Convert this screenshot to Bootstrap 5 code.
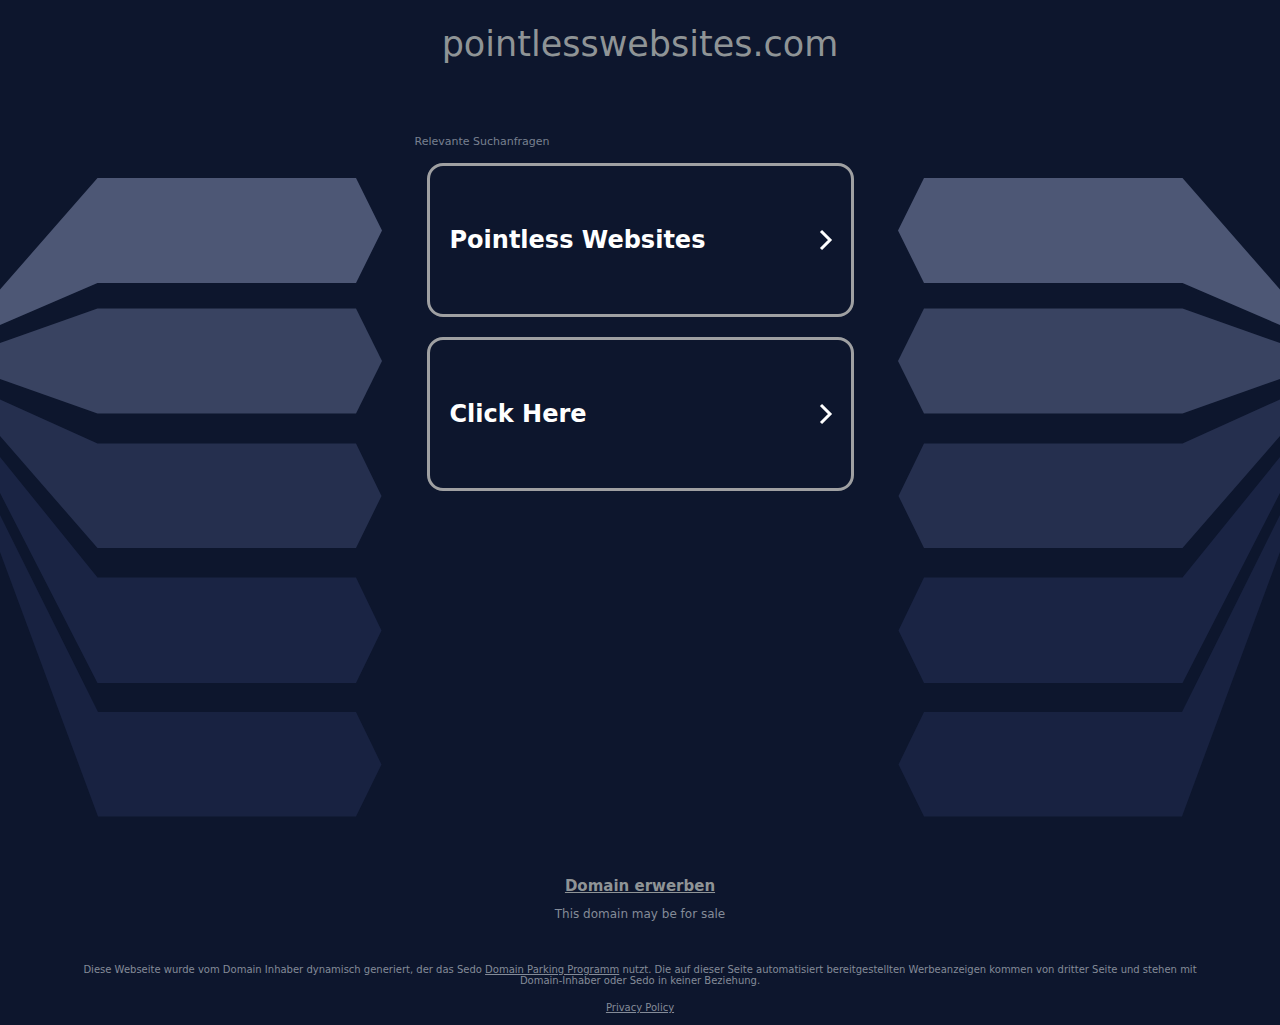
<!DOCTYPE html>
<html lang="de">
<head>
<meta charset="utf-8">
<meta name="viewport" content="width=device-width, initial-scale=1">
<title>pointlesswebsites.com</title>
<link href="https://cdn.jsdelivr.net/npm/bootstrap@5.3.0/dist/css/bootstrap.min.css" rel="stylesheet">
<style>
  body { background: #0d162d; color: #848b98; font-family: "DejaVu Sans", sans-serif; }
  a { color: inherit; }
  .domain-title { color: #8f9496; font-size: 35px; line-height: 48px; padding: 20px 0 60px; }
  .arrows { flex: 0 0 382px; margin-top: 50px; }
  .arrows svg { display: block; width: 100%; height: auto; }
  .searches { flex: 0 1 451px; }
  .searches h2 { font-size: 11px; line-height: 12px; margin-bottom: 15px; color: #788090; padding-top: 8px; }
  .search-list { gap: 20px; }
  .search-link { min-height: 154px; padding: 0 18px 0 20px; border: 3px solid #9fa0a2; border-radius: 16px; color: #fff; font-size: 24px; line-height: 30px; }
  .search-link:hover { border-color: #fff; color: #fff; }
  .buy { margin-top: 58px; font-size: 15px; line-height: 20px; color: #8f9496; }
  .sale { font-size: 12px; line-height: 16px; margin: 10px 0 42px; }
  .legal { font-size: 10px; line-height: 11px; }
  .legal p { margin-bottom: 16px; }
</style>
</head>
<body>
<header class="text-center">
  <h1 class="domain-title fw-normal m-0">pointlesswebsites.com</h1>
</header>

<main class="d-flex justify-content-center justify-content-lg-between align-items-start">
  <div class="arrows d-none d-lg-block" aria-hidden="true">
    <svg viewBox="0 0 382 640">
      <g id="ribbons">
        <path fill="#4d5775" d="M0 111.500 97.500 0H356l26 52.500L356 105H97.500L0 147z"/>
        <path fill="#394361" d="M0 165 97.500 130.500H356l26 52.500-26 52.500H97.500L0 201z"/>
        <path fill="#252f4e" d="M0 221.500 97.500 265.500H356l25.500 52.500-25.500 52H97.500L0 258z"/>
        <path fill="#1a2444" d="M0 279 97.500 399.500H356l25.500 53-25.500 52.500H97.500L0 315z"/>
        <path fill="#182241" d="M0 337 98 534H356l25.500 52.500-25.500 52H98L0 374z"/>
      </g>
    </svg>
  </div>

  <section class="searches">
    <h2 class="fw-normal">Relevante Suchanfragen</h2>
    <div class="search-list d-flex flex-column mx-2 px-1">
      <a class="search-link d-flex align-items-center justify-content-between fw-bold text-decoration-none" href="#websites">
        <span>Pointless Websites</span>
        <svg width="14" height="22" viewBox="0 0 14 22" fill="none" stroke="#fff" stroke-width="3" aria-hidden="true"><path d="m2 2 9 9-9 9"/></svg>
      </a>
      <a class="search-link d-flex align-items-center justify-content-between fw-bold text-decoration-none" href="#click">
        <span>Click Here</span>
        <svg width="14" height="22" viewBox="0 0 14 22" fill="none" stroke="#fff" stroke-width="3" aria-hidden="true"><path d="m2 2 9 9-9 9"/></svg>
      </a>
    </div>
  </section>

  <div class="arrows d-none d-lg-block" aria-hidden="true">
    <svg viewBox="0 0 382 640"><use href="#ribbons" transform="matrix(-1 0 0 1 382 0)"/></svg>
  </div>
</main>

<footer class="container text-center">
  <div class="buy"><a class="fw-bold" href="#buy">Domain erwerben</a></div>
  <p class="sale">This domain may be for sale</p>
  <div class="legal">
    <p>Diese Webseite wurde vom Domain Inhaber dynamisch generiert, der das Sedo <a href="#parking">Domain Parking Programm</a> nutzt. Die auf dieser Seite automatisiert bereitgestellten Werbeanzeigen kommen von dritter Seite und stehen mit Domain-Inhaber oder Sedo in keiner Beziehung.</p>
    <a href="#privacy">Privacy Policy</a>
  </div>
</footer>
<script src="https://cdn.jsdelivr.net/npm/bootstrap@5.3.0/dist/js/bootstrap.bundle.min.js"></script>
</body>
</html>
